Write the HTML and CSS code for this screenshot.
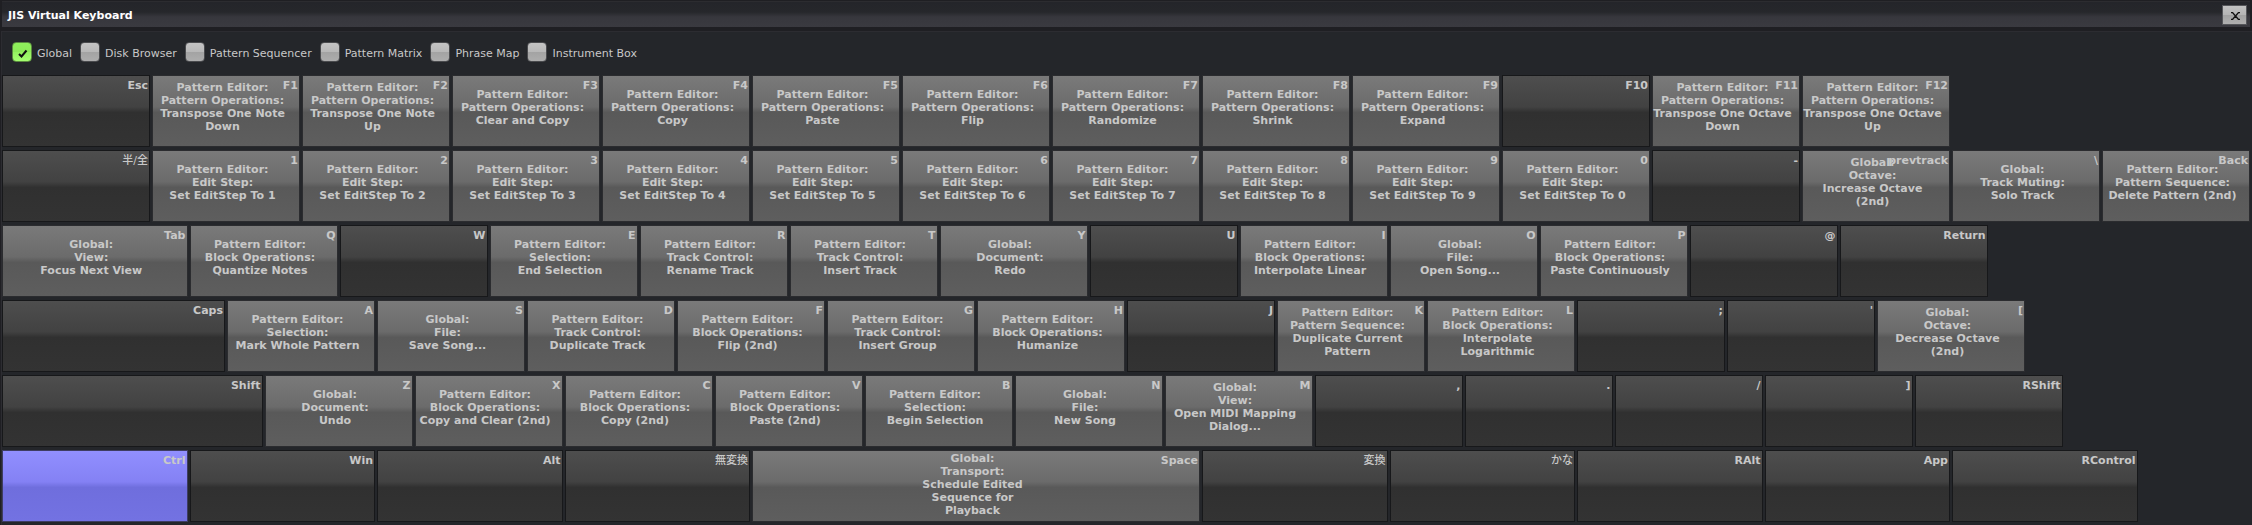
FILE: index.html
```
<!DOCTYPE html>
<html lang="en">
<head>
<meta charset="utf-8">
<title>JIS Virtual Keyboard</title>
<link rel="stylesheet" href="styles.css">
</head>
<body>
<header class="titlebar">
  <h1 class="title">JIS Virtual Keyboard</h1>
  <button class="close" type="button" aria-label="Close"><svg width="9" height="8" viewBox="0 0 9 8"><path d="M0 .5 H1.5 L7.5 7.5 H9 M9 .5 H7.5 L1.5 7.5 H0" stroke="#111" stroke-width="1.3" fill="none"/></svg></button>
</header>
<main class="panel">
  <form class="filters">
    <label class="filter"><input class="tick" type="checkbox" checked><span>Global</span></label>
    <label class="filter"><input class="tick" type="checkbox"><span>Disk Browser</span></label>
    <label class="filter"><input class="tick" type="checkbox"><span>Pattern Sequencer</span></label>
    <label class="filter"><input class="tick" type="checkbox"><span>Pattern Matrix</span></label>
    <label class="filter"><input class="tick" type="checkbox"><span>Phrase Map</span></label>
    <label class="filter"><input class="tick" type="checkbox"><span>Instrument Box</span></label>
  </form>
  <div class="keyboard" id="keyboard"></div>
</main>
<script src="keys.js"></script>
</body>
</html>
```
FILE: styles.css
```
* { box-sizing: border-box; }

body {
  margin: 0;
  background: #1f1f23;
  color: #c8c8c8;
  font: 11px/13px "DejaVu Sans", "Noto Sans CJK JP", sans-serif;
}

.titlebar {
  display: flex;
  align-items: center;
  justify-content: space-between;
  height: 26px;
  margin: 1px 2px 0;
  padding: 1px 3px 0 6px;
  border-top: 1px solid #2c2c30;
  background: linear-gradient(#24252a 0, #26272b 40%, #37373d 60%, #3a3a40 100%);
}

.title {
  margin: 0;
  color: #fff;
  font-size: 11px;
  font-weight: bold;
}

.close {
  display: flex;
  align-items: center;
  justify-content: center;
  width: 25px;
  height: 20px;
  padding: 2px 0 0 2px;
  border: 1px solid #55565a;
  background: linear-gradient(#c2c2c2 0, #b4b4b4 48%, #a2a2a2 52%, #b0b0b0 100%);
}

.panel {
  margin: 4px 0 0 1px;
  padding: 0 0 3px;
  border: solid #2c2c31;
  border-width: 1px 0 0 1px;
  background: #24262a;
}

.filters {
  display: flex;
  gap: 8px;
  height: 43px;
  padding: 10px 0 0 10px;
}

.filter {
  display: flex;
  gap: 5px;
  height: 20px;
  line-height: 23px;
}

.tick {
  appearance: none;
  width: 20px;
  height: 20px;
  margin: 0;
  border: 1px solid #4a4b4e;
  border-radius: 4px;
  background: linear-gradient(#c4c4c4 0, #b8b8b8 48%, #a3a3a3 52%, #adadad 100%);
}

.tick:checked {
  border-color: #5a8a3f;
  background:
    url("data:image/svg+xml,%3Csvg xmlns='http://www.w3.org/2000/svg' viewBox='0 0 18 18'%3E%3Cpath d='M6 11 L8.5 13.5 L13.5 7.5' fill='none' stroke='%23111' stroke-width='2'/%3E%3C/svg%3E"),
    linear-gradient(#8ff05c 0, #8cea58 48%, #94f260 52%, #a4ff70 100%);
}

.keyboard { display: grid; gap: 3px; }

.row {
  display: grid;
  grid-template-columns: repeat(120, minmax(0, 1fr));
}

.key {
  position: relative;
  display: flex;
  align-items: safe center;
  justify-content: safe center;
  min-width: 0;
  height: 72px;
  margin-right: 2px;
  padding: 1px 7px 9px 0;
  border: 1px solid #17181a;
  background: linear-gradient(#4e4e4e 0, #424242 44%, #303030 52%, #333 100%);
  color: #c8c8c8;
  font: bold 11px/13px "DejaVu Sans", "Noto Sans CJK JP", sans-serif;
  white-space: nowrap;
}

.key.bound {
  border-color: #2b2c2f;
  background: linear-gradient(#7a7a7a 0, #6b6b6b 44%, #595959 52%, #5e5e5e 100%);
}

.key.held {
  border-color: #3e3d63;
  background: linear-gradient(#918fff 0, #8481f4 44%, #6f6edd 52%, #7372e2 100%);
}

.cap {
  position: absolute;
  top: 3px;
  right: 1px;
}

.cap:lang(ja) { font-weight: 500; }

.w8 { grid-column: span 8; }
.w10 { grid-column: span 10; }
.w12 { grid-column: span 12; }
.w14 { grid-column: span 14; }
.w24 { grid-column: span 24; }
```
FILE: keys.js
```
// Each key: [cap, bound action ("|" separates lines), width in eighths of a key, held]
const PE = "Pattern Editor:|";
const OPS = PE + "Pattern Operations:|";
const BLOCK = PE + "Block Operations:|";
const STEP = PE + "Edit Step:|Set EditStep To ";
const rows = [
  [["Esc"], ["F1", OPS + "Transpose One Note|Down"], ["F2", OPS + "Transpose One Note|Up"],
   ["F3", OPS + "Clear and Copy"], ["F4", OPS + "Copy"], ["F5", OPS + "Paste"],
   ["F6", OPS + "Flip"], ["F7", OPS + "Randomize"], ["F8", OPS + "Shrink"],
   ["F9", OPS + "Expand"], ["F10"], ["F11", OPS + "Transpose One Octave|Down"],
   ["F12", OPS + "Transpose One Octave|Up"]],
  [["半/全"], ...[..."1234567890"].map(n => [n, STEP + n]), ["-"],
   ["prevtrack", "Global:|Octave:|Increase Octave|(2nd)"],
   ["\\", "Global:|Track Muting:|Solo Track"],
   ["Back", PE + "Pattern Sequence:|Delete Pattern (2nd)"]],
  [["Tab", "Global:|View:|Focus Next View", 10], ["Q", BLOCK + "Quantize Notes"], ["W"],
   ["E", PE + "Selection:|End Selection"], ["R", PE + "Track Control:|Rename Track"],
   ["T", PE + "Track Control:|Insert Track"], ["Y", "Global:|Document:|Redo"], ["U"],
   ["I", BLOCK + "Interpolate Linear"], ["O", "Global:|File:|Open Song..."],
   ["P", BLOCK + "Paste Continuously"], ["@"], ["Return"]],
  [["Caps", "", 12], ["A", PE + "Selection:|Mark Whole Pattern"],
   ["S", "Global:|File:|Save Song..."], ["D", PE + "Track Control:|Duplicate Track"],
   ["F", BLOCK + "Flip (2nd)"], ["G", PE + "Track Control:|Insert Group"],
   ["H", BLOCK + "Humanize"], ["J"],
   ["K", PE + "Pattern Sequence:|Duplicate Current|Pattern"],
   ["L", BLOCK + "Interpolate|Logarithmic"], [";"], ["'"],
   ["[", "Global:|Octave:|Decrease Octave|(2nd)"]],
  [["Shift", "", 14], ["Z", "Global:|Document:|Undo"], ["X", BLOCK + "Copy and Clear (2nd)"],
   ["C", BLOCK + "Copy (2nd)"], ["V", BLOCK + "Paste (2nd)"],
   ["B", PE + "Selection:|Begin Selection"], ["N", "Global:|File:|New Song"],
   ["M", "Global:|View:|Open MIDI Mapping|Dialog..."], [","], ["."], ["/"], ["]"], ["RShift"]],
  [["Ctrl", "", 10, true], ["Win", "", 10], ["Alt", "", 10], ["無変換", "", 10],
   ["Space", "Global:|Transport:|Schedule Edited|Sequence for|Playback", 24],
   ["変換", "", 10], ["かな", "", 10], ["RAlt", "", 10], ["App", "", 10], ["RControl", "", 10]],
];

const keyboard = document.getElementById("keyboard");
for (const keys of rows) {
  const row = document.createElement("div");
  row.className = "row";
  for (const [cap, action = "", width = 8, held = false] of keys) {
    const key = document.createElement("button");
    key.type = "button";
    key.className = "key w" + width + (action ? " bound" : "") + (held ? " held" : "");
    if (action) {
      const text = document.createElement("span");
      text.className = "action";
      action.split("|").forEach((line, i) => {
        if (i) text.append(document.createElement("br"));
        text.append(line);
      });
      key.append(text);
    }
    const label = document.createElement("span");
    label.className = "cap";
    if (/[^\x00-\x7f]/.test(cap)) label.lang = "ja";
    label.textContent = cap;
    key.append(label);
    row.append(key);
  }
  keyboard.append(row);
}
```
